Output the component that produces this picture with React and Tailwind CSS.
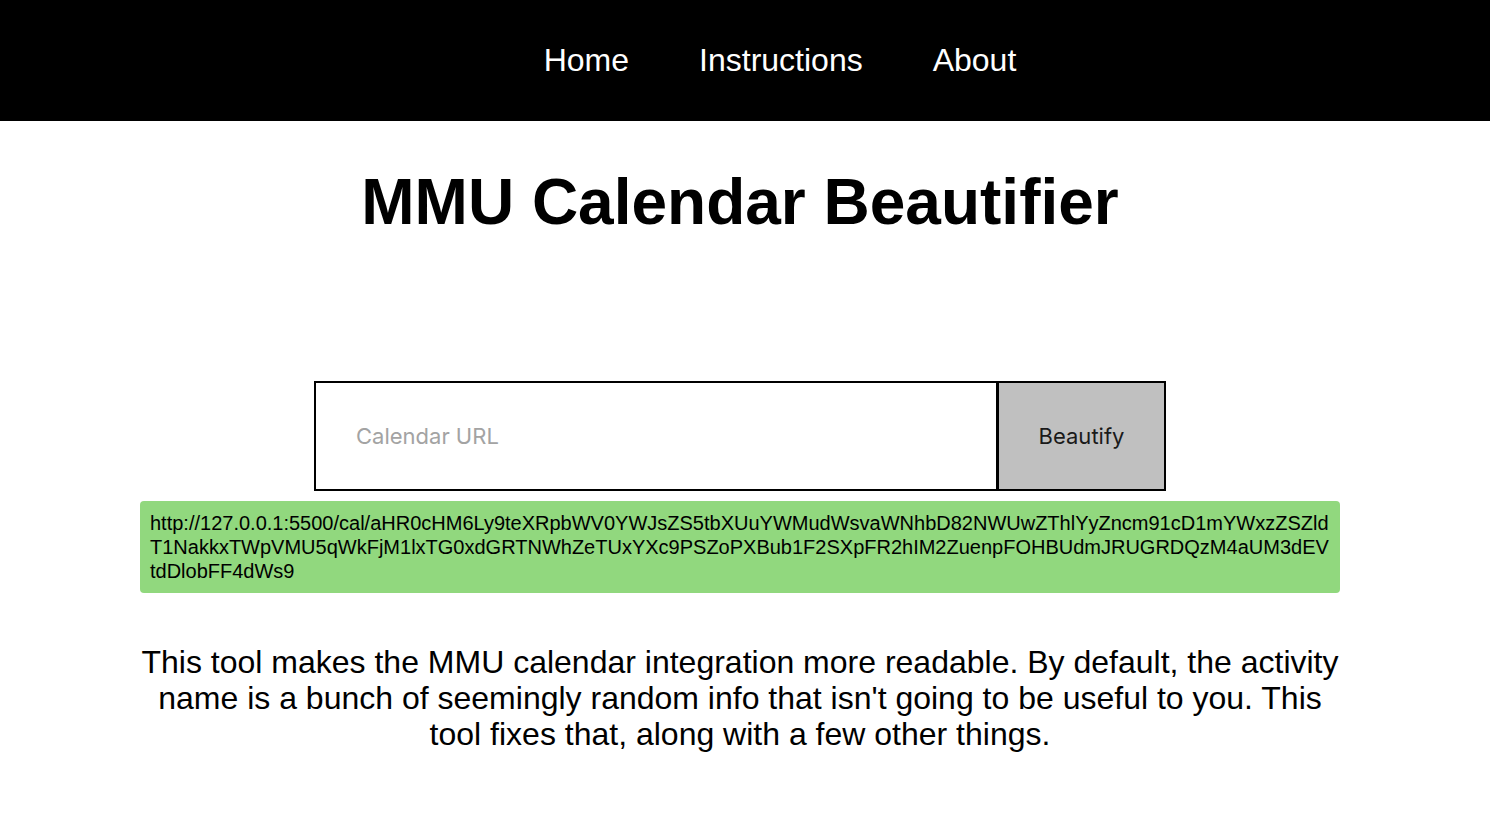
import React from "react";

export default function App() {
  const url =
    "http://127.0.0.1:5500/cal/aHR0cHM6Ly9teXRpbWV0YWJsZS5tbXUuYWMudWsvaWNhbD82NWUwZThlYyZncm91cD1mYWxzZSZldT1NakkxTWpVMU5qWkFjM1lxTG0xdGRTNWhZeTUxYXc9PSZoPXBub1F2SXpFR2hIM2ZuenpFOHBUdmJRUGRDQzM4aUM3dEVtdDlobFF4dWs9";
  return (
    <div className="w-full min-h-[826px] bg-white text-black font-['Liberation_Sans',Arial,sans-serif]">
      <nav className="w-full h-[121px] bg-black flex items-center justify-center pl-[70px] gap-[70px] text-white text-[32px]">
        <a className="leading-none -mt-[2px]">Home</a>
        <a className="leading-none -mt-[2px]">Instructions</a>
        <a className="leading-none -mt-[2px]">About</a>
      </nav>
      <main className="w-[1480px]">
        <h1 className="text-center font-bold text-[64px] leading-[74px] mt-[44px]">
          MMU Calendar Beautifier
        </h1>
        <div className="flex justify-center mt-[142px]">
          <input
            placeholder="Calendar URL"
            className="w-[684px] h-[110px] border-2 border-black pl-[40px] text-[22px] font-['Inter',sans-serif] placeholder:text-[#a3a3a3] outline-none"
          />
          <button className="w-[169px] h-[110px] bg-[#c0c0c0] border-2 border-black -ml-[1px] text-[22px] text-[#1a1a1a] font-['Inter',sans-serif]">
            Beautify
          </button>
        </div>
        <div className="w-[1200px] mx-auto mt-[10px] bg-[#91d87e] rounded-[4px] px-[10px] py-[10px] text-[20px] leading-[24px] break-all">
          {url}
        </div>
        <p className="w-[1200px] mx-auto mt-[51px] text-center text-[32px] leading-[36px]">
          This tool makes the MMU calendar integration more readable. By default, the activity name is a bunch of seemingly random info that isn't going to be useful to you. This tool fixes that, along with a few other things.
        </p>
      </main>
    </div>
  );
}
